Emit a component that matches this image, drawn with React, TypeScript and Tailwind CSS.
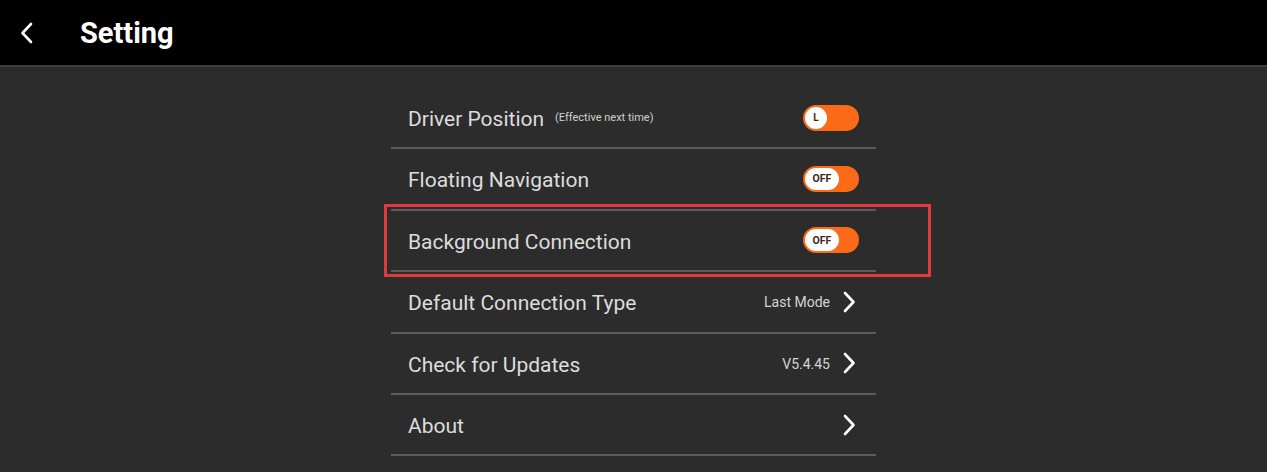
type Row = {
  label: string;
  note?: string;
  toggle?: string;
  value?: string;
  arrow?: boolean;
  marked?: boolean;
};

const rows: Row[] = [
  { label: "Driver Position", note: "(Effective next time)", toggle: "L" },
  { label: "Floating Navigation", toggle: "OFF" },
  { label: "Background Connection", toggle: "OFF", marked: true },
  { label: "Default Connection Type", value: "Last Mode", arrow: true },
  { label: "Check for Updates", value: "V5.4.45", arrow: true },
  { label: "About", arrow: true },
];

const Toggle = ({ text }: { text: string }) => {
  const round = text.length === 1;
  return (
    <div className="flex h-[26px] w-[56px] items-center rounded-full bg-[#fb6a17] p-[2px]">
      <div
        className={
          round
            ? "flex h-[22px] w-[22px] items-center justify-center rounded-full bg-white text-[10px] font-bold text-[#3a2a20]"
            : "flex h-[22px] w-[34px] items-center justify-center rounded-full bg-white text-[10.5px] font-bold text-[#3a2a20]"
        }
      >
        {text}
      </div>
    </div>
  );
};

const Chevron = ({ flip }: { flip?: boolean }) => (
  <svg width="16" height="22" viewBox="0 0 16 22" fill="none" className={flip ? "-scale-x-100" : ""}>
    <polyline
      points="4,2 12.5,11 4,20"
      stroke="white"
      strokeWidth="2.6"
      strokeLinecap="round"
      strokeLinejoin="round"
    />
  </svg>
);

const App = () => {
  return (
    <div className="h-[472px] w-full overflow-hidden bg-[#2c2c2c] font-['Roboto',sans-serif]">
      <header className="flex h-[67px] items-center border-b-2 border-[#3e3e3e] bg-black">
        <div className="ml-[19px] mt-[1px]">
          <Chevron flip />
        </div>
        <h1 className="ml-[45px] mt-[3px] text-[29px] font-bold text-white">Setting</h1>
      </header>

      <div className="mx-auto mt-[21px] w-[485px]">
        {rows.map((row) => (
          <div
            key={row.label}
            className="relative flex h-[61.4px] items-center border-b-2 border-[#5c5c5c] pl-[17px] pr-[17px]"
          >
            {row.marked && (
              <div className="pointer-events-none absolute -top-[7px] -bottom-[7px] -left-[7px] -right-[55px] border-[3px] border-[#e0393e]" />
            )}
            <span className="mt-[4px] text-[21px] text-[#dcdcdc]">{row.label}</span>
            {row.note && (
              <span className="ml-[11px] mt-[2px] text-[11px] text-[#d0d0d0]">{row.note}</span>
            )}
            <div className="ml-auto flex items-center">
              {row.value && (
                <span className="mt-[2px] text-[14px] text-[#d4d4d4]">{row.value}</span>
              )}
              {row.toggle && <Toggle text={row.toggle} />}
              {row.arrow && (
                <div className="ml-[11px] mr-[2px]">
                  <Chevron />
                </div>
              )}
            </div>
          </div>
        ))}
      </div>
    </div>
  );
};

export default App;
